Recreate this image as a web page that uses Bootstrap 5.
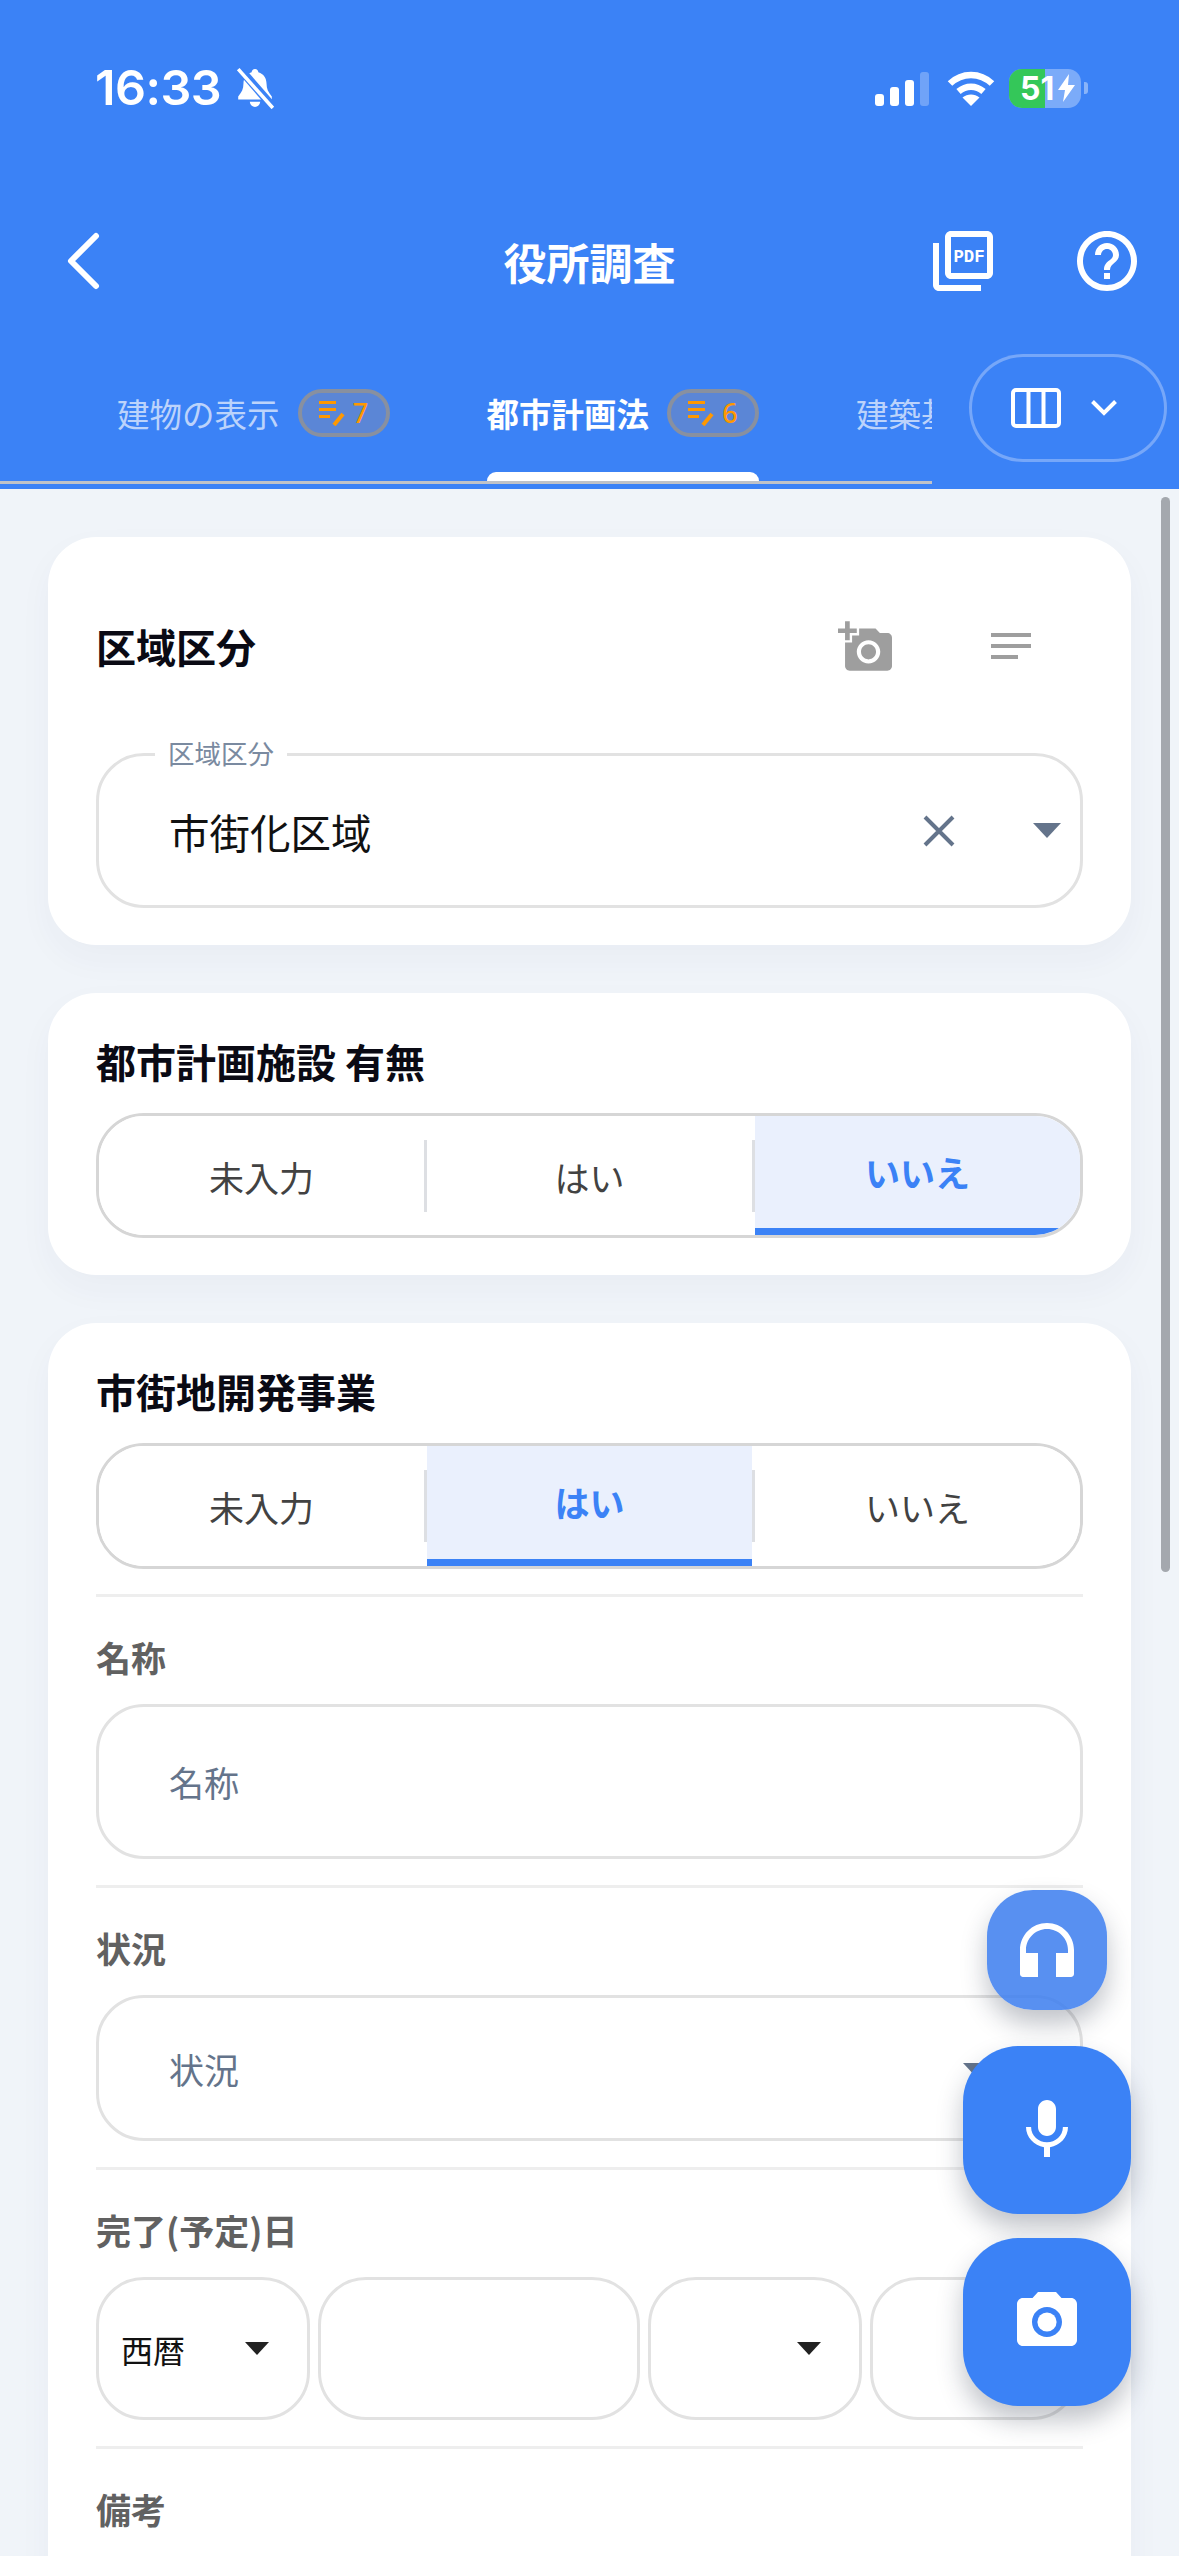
<!DOCTYPE html>
<html lang="ja">
<head>
<meta charset="utf-8">
<title>役所調査</title>
<link href="https://cdn.jsdelivr.net/npm/bootstrap@5.3.0/dist/css/bootstrap.min.css" rel="stylesheet">
<style>
html,body{margin:0;height:2556px;overflow:hidden}
body{position:relative;background:#f0f4f9;font-family:"Noto Sans CJK JP","Noto Sans",sans-serif;color:#111}
.app-head{height:489px;background:#3b82f6;color:#fff}
.stat-row{height:176px;padding:0 91px 0 95px}
.clock{font-family:Inter,"Liberation Sans",sans-serif;font-weight:600;font-size:48.5px;letter-spacing:-.5px;line-height:1}
.bell{margin-left:13px}
.cell-bars{gap:6px;height:35px;margin-right:18.5px}
.cell-bars i{display:block;width:9px;background:#fff;border-radius:3px}
.cell-bars i:nth-child(1){height:12px}
.cell-bars i:nth-child(2){height:19px}
.cell-bars i:nth-child(3){height:26px}
.cell-bars i:nth-child(4){height:34px;background:rgba(255,255,255,.27)}
.batt{width:72px;height:39px;border-radius:13px;margin-left:14px;overflow:hidden;position:relative;background:rgba(255,255,255,.33)}
.batt-fill{width:36px;background:#34c759}
.batt-txt{position:absolute;inset:0;padding-left:11px;font:700 32px/39px Inter,"Liberation Sans",sans-serif;color:#fff}
.batt-nub{width:4px;height:12px;margin-left:3px;border-radius:0 3px 3px 0;background:rgba(255,255,255,.4)}
.nav-row{height:170px;position:relative;padding:0 36px 0 64px}
.nav-title{position:absolute;left:0;right:0;text-align:center;font-weight:700;font-size:43px;line-height:60px;top:55px;margin:0}
.nav-tools{gap:72px}
.tab-zone{height:143px;position:relative}
.tab-scroll{width:932px;height:138px;border-bottom:3px solid #bfc2c8;overflow:hidden;padding:43px 0 0 117px;gap:97px;white-space:nowrap}
.tab-itm{position:relative;gap:18px;height:92px;align-items:flex-start;flex:none}
.tab-lbl{font-size:32.5px;line-height:48px;height:48px;color:#bcd3fb;font-weight:400}
.tab-itm.on .tab-lbl{color:#fff;font-weight:700}
.tab-pill{width:92px;height:48px;border:4px solid #8890a0;border-radius:24px;background:#5b86d6;color:#ff9800;font:500 27px/40px "Noto Sans",sans-serif;gap:8px}
.tab-bar{position:absolute;left:0;right:0;bottom:0;height:9px;background:#fff;border-radius:9px 9px 0 0}
.view-btn{position:absolute;left:969px;top:8px;width:198px;height:108px;border:3px solid rgba(255,255,255,.3);border-radius:54px;background:#3b82f6;gap:30px;padding-right:8px}
.page-body{padding:48px 48px 0;gap:48px}
.sheet{border:0;border-radius:48px;background:#fff;padding:0 48px;box-shadow:0 14px 34px rgba(40,60,90,.04)}
.sheet-ttl{font-size:40px;font-weight:700;line-height:48px;margin:0;color:#0a0a14;white-space:nowrap}
.head-one{padding-top:69px;height:149px;margin-bottom:67px}
.head-tools{gap:99px;padding-right:52px}
.fld{height:155px;border:3px solid #e2e2e2;border-radius:48px;background:#fff;position:relative;padding:0 70px}
.fld-val{font-size:40.5px;color:#111;margin-top:3px}
.fld-float{position:absolute;left:56px;top:-20px;padding:0 13px;background:#fff;font-size:26.5px;line-height:34px;color:#7a8aa0}
.tri{width:0;height:0;border-left:14.5px solid transparent;border-right:14.5px solid transparent;border-top:15px solid #64748b;flex:none}
.fld-clearwrap{position:absolute;right:19px;top:0;bottom:0;gap:78px}
.head-two{padding-top:44px;height:92px;margin-bottom:28px}
.seg{height:125px;border:3px solid #d6d6d6;border-radius:48px;overflow:hidden;background:#fff}
.seg-tall{height:126px}
.seg-itm{flex:1 1 0;font-size:35px;color:#424242;padding-top:3px;background:#fff}
.seg-itm.on{background:#eaf0fd;color:#3b82f6;font-weight:700;border-bottom:7px solid #3b82f6;padding-top:0}
.seg-sep{width:3px;height:72px;background:#dddfe3;flex:none}
.pad-b{padding-bottom:37px}
.sec{border-top:3px solid #eeeeee;padding:40px 0 26px}
.sec-lbl{font-size:35px;font-weight:700;line-height:40px;color:#616161;margin:0 0 27px}
.seg-wrap{padding-bottom:25px}
input.form-control.fld{padding:0 70px;font-size:35px;color:#111;box-shadow:none}
input.form-control.fld::placeholder{color:#64748b;opacity:1}
.fld-ph{font-size:35px;color:#64748b;margin-top:2px}
.sel-two{height:146px}
.sel-two .fld-caret{position:absolute;right:89px;top:65px}
.date-row{gap:8px}
.date-box{width:214px;height:143px;border:3px solid #e2e2e2;border-radius:48px;background:#fff;position:relative;flex:none;padding:0 22px;font-size:32px}
.date-box.wide{width:322px}
.date-box.tail{width:210px}
.tri-dark{border-left:12px solid transparent;border-right:12px solid transparent;border-top:13px solid #222;position:absolute;right:38px;top:62px}
.sheet-last{height:1300px}
.over-btn{position:absolute;background:#3b82f6;color:#fff;border:0;padding:0;box-shadow:0 14px 26px rgba(30,40,60,.28)}
.fab-head{left:987px;top:1890px;width:120px;height:120px;border-radius:46px;background:rgba(59,125,238,.85)}
.fab-mic{left:963px;top:2046px;width:168px;height:168px;border-radius:56px}
.fab-cam{left:963px;top:2238px;width:168px;height:168px;border-radius:56px}
.over-scroll{position:absolute;left:1161px;top:497px;width:9px;height:1075px;border-radius:5px;background:#a4a8ae}
</style>
</head>
<body>
<header class="app-head">
  <div class="stat-row d-flex align-items-center justify-content-between">
    <div class="d-flex align-items-center">
      <span class="clock">16:33</span>
      <svg class="bell" width="42" height="42" viewBox="0 0 40 40"><path fill="#fff" d="M20 2c2 0 3 1.400 3.200 3 5 1.500 7.800 5.600 7.800 11 0 5 1.600 8 5 12v3H4v-3c3.400-4 5-7 5-12 0-5.400 2.800-9.500 7.800-11C17 3.400 18 2 20 2zM15 33h10c-.4 3-2.400 5-5 5s-4.600-2-5-5z"/><path d="M5 1l32 37" stroke="#3b82f6" stroke-width="8"/><path d="M4 2l33 37" stroke="#fff" stroke-width="3.400"/></svg>
    </div>
    <div class="d-flex align-items-center">
      <div class="cell-bars d-flex align-items-end"><i></i><i></i><i></i><i></i></div>
      <svg width="48" height="36" viewBox="0 0 48 36"><path fill="none" stroke="#fff" stroke-width="6.500" d="M3 13.500C15 2 33 2 45 13.500M11.500 21.500c7.500-6.500 17.500-6.500 25 0"/><path fill="#fff" d="M24 36l-8.500-8.500c5-4 12-4 17 0z"/></svg>
      <div class="batt d-flex"><div class="batt-fill"></div><div class="batt-txt d-flex align-items-center">51<svg width="18" height="28" viewBox="0 0 18 28" class="ms-1"><path fill="#fff" d="M11 0L0 16h7l-2 12L17 11h-7z"/></svg></div></div>
      <div class="batt-nub"></div>
    </div>
  </div>
  <div class="nav-row d-flex align-items-center justify-content-between">
    <svg width="38" height="60" viewBox="0 0 38 60"><path fill="none" stroke="#fff" stroke-width="6" stroke-linecap="round" stroke-linejoin="round" d="M32 5L7 30l25 25"/></svg>
    <h1 class="nav-title">役所調査</h1>
    <div class="nav-tools d-flex align-items-center">
      <svg width="72" height="72" viewBox="0 0 24 24"><path fill="#fff" d="M20 2H8c-1.100 0-2 .9-2 2v12c0 1.100.9 2 2 2h12c1.100 0 2-.9 2-2V4c0-1.100-.9-2-2-2zm0 14H8V4h12v12zM4 6H2v14c0 1.100.9 2 2 2h14v-2H4V6z"/><text x="14" y="12.300" text-anchor="middle" fill="#fff" font-family="Liberation Mono" font-weight="700" font-size="6" textLength="10.400" lengthAdjust="spacingAndGlyphs">PDF</text></svg>
      <svg width="72" height="72" viewBox="0 0 24 24"><path fill="#fff" d="M11 18h2v-2h-2v2zm1-16C6.480 2 2 6.480 2 12s4.480 10 10 10 10-4.480 10-10S17.520 2 12 2zm0 18c-4.410 0-8-3.590-8-8s3.590-8 8-8 8 3.590 8 8-3.590 8-8 8zm0-14c-2.210 0-4 1.790-4 4h2c0-1.100.9-2 2-2s2 .9 2 2c0 2-3 1.750-3 5h2c0-2.250 3-2.500 3-5 0-2.210-1.790-4-4-4z"/></svg>
    </div>
  </div>
  <div class="tab-zone">
    <div class="tab-scroll d-flex">
      <div class="tab-itm d-flex"><span class="tab-lbl">建物の表示</span><span class="tab-pill d-flex align-items-center justify-content-center"><svg width="26" height="26" viewBox="0 0 26 26"><path fill="#ff9800" d="M0 1h17v3H0zM0 8h17v3H0zM0 15h11v3H0z"/><path stroke="#ff9800" stroke-width="4" d="M15 25l9-11"/></svg>7</span></div>
      <div class="tab-itm on d-flex"><span class="tab-lbl">都市計画法</span><span class="tab-pill d-flex align-items-center justify-content-center"><svg width="26" height="26" viewBox="0 0 26 26"><path fill="#ff9800" d="M0 1h17v3H0zM0 8h17v3H0zM0 15h11v3H0z"/><path stroke="#ff9800" stroke-width="4" d="M15 25l9-11"/></svg>6</span><span class="tab-bar"></span></div>
      <div class="tab-itm d-flex"><span class="tab-lbl">建築基準法</span></div>
    </div>
    <div class="view-btn d-flex align-items-center justify-content-center">
      <svg width="50" height="40" viewBox="0 0 50 40"><rect x="2" y="2" width="46" height="36" rx="3" fill="none" stroke="#fff" stroke-width="4"/><path stroke="#fff" stroke-width="4" d="M17.500 2v36M32.500 2v36"/></svg>
      <svg width="26" height="18" viewBox="0 0 26 18"><path fill="none" stroke="#fff" stroke-width="4" d="M1.500 2.500L13 14 24.500 2.500"/></svg>
    </div>
  </div>
</header>

<main class="page-body d-flex flex-column">
  <section class="card sheet">
    <div class="head-one d-flex align-items-center justify-content-between">
      <h2 class="sheet-ttl">区域区分</h2>
      <div class="head-tools d-flex align-items-center">
        <svg width="54" height="54" viewBox="0 0 23 23"><path fill="#9e9e9e" d="M3 4V1h2v3h3v2H5v3H3V6H0V4h3zm3 6V7h3V4h7l1.830 2H21c1.100 0 2 .9 2 2v12c0 1.100-.9 2-2 2H5c-1.100 0-2-.9-2-2V10h3zm7 9c2.760 0 5-2.240 5-5s-2.240-5-5-5-5 2.240-5 5 2.240 5 5 5zm-3.200-5c0 1.770 1.430 3.200 3.200 3.200s3.200-1.430 3.200-3.200-1.430-3.200-3.200-3.200-3.200 1.430-3.200 3.200z"/></svg>
        <svg width="40" height="26" viewBox="0 0 40 26"><path fill="#9e9e9e" d="M0 0h40v4H0zM0 11h40v4H0zM0 22h27v4H0z"/></svg>
      </div>
    </div>
    <div class="fld d-flex align-items-center">
      <span class="fld-float">区域区分</span>
      <span class="fld-val">市街化区域</span>
      <div class="fld-clearwrap d-flex align-items-center" >
        <svg width="32" height="32" viewBox="0 0 32 32"><path stroke="#64748b" stroke-width="4" d="M2 2l28 28M30 2L2 30"/></svg>
        <span class="tri"></span>
      </div>
    </div>
    <div class="pad-b"></div>
  </section>

  <section class="card sheet">
    <div class="head-two"><h2 class="sheet-ttl">都市計画施設 有無</h2></div>
    <div class="seg d-flex align-items-stretch">
      <div class="seg-itm d-flex align-items-center justify-content-center">未入力</div>
      <span class="seg-sep align-self-center"></span>
      <div class="seg-itm d-flex align-items-center justify-content-center">はい</div>
      <span class="seg-sep align-self-center"></span>
      <div class="seg-itm on d-flex align-items-center justify-content-center">いいえ</div>
    </div>
    <div class="pad-b"></div>
  </section>

  <section class="card sheet sheet-last">
    <div class="head-two"><h2 class="sheet-ttl">市街地開発事業</h2></div>
    <div class="seg-wrap">
      <div class="seg seg-tall d-flex align-items-stretch">
        <div class="seg-itm d-flex align-items-center justify-content-center">未入力</div>
        <span class="seg-sep align-self-center"></span>
        <div class="seg-itm on d-flex align-items-center justify-content-center">はい</div>
        <span class="seg-sep align-self-center"></span>
        <div class="seg-itm d-flex align-items-center justify-content-center">いいえ</div>
      </div>
    </div>
    <div class="sec">
      <p class="sec-lbl">名称</p>
      <input class="form-control fld" type="text" placeholder="名称">
    </div>
    <div class="sec">
      <p class="sec-lbl">状況</p>
      <div class="fld sel-two d-flex align-items-center"><span class="fld-ph">状況</span><span class="tri fld-caret"></span></div>
    </div>
    <div class="sec">
      <p class="sec-lbl">完了(予定)日</p>
      <div class="date-row d-flex">
        <div class="date-box d-flex align-items-center">西暦<span class="tri tri-dark"></span></div>
        <div class="date-box wide"></div>
        <div class="date-box"><span class="tri tri-dark"></span></div>
        <div class="date-box tail"></div>
      </div>
    </div>
    <div class="sec">
      <p class="sec-lbl">備考</p>
    </div>
  </section>
</main>

<div class="over-scroll"></div>
<button class="over-btn fab-head d-flex align-items-center justify-content-center" aria-label="音声"><svg width="72" height="72" viewBox="0 -.5 24 24"><path fill="#fff" d="M12 2.500c-4.970 0-9 4.030-9 9v8c0 .55.45 1 1 1h5v-8H5v-1c0-3.870 3.130-7 7-7s7 3.130 7 7v1h-4v8h5c.55 0 1-.45 1-1v-8c0-4.970-4.030-9-9-9z"/></svg></button>
<button class="over-btn fab-mic d-flex align-items-center justify-content-center" aria-label="マイク"><svg width="72" height="72" viewBox="0 0 24 24"><path fill="#fff" d="M12 14c1.660 0 2.990-1.340 2.990-3L15 5c0-1.660-1.340-3-3-3S9 3.340 9 5v6c0 1.660 1.340 3 3 3zm5.300-3c0 3-2.540 5.100-5.300 5.100S6.700 14 6.700 11H5c0 3.410 2.720 6.230 6 6.720V21h2v-3.280c3.280-.48 6-3.300 6-6.720h-1.700z"/></svg></button>
<button class="over-btn fab-cam d-flex align-items-center justify-content-center" aria-label="カメラ"><svg width="72" height="72" viewBox="0 0 24 24"><circle fill="#fff" cx="12" cy="12" r="3.200"/><path fill="#fff" d="M9 2L7.170 4H4c-1.100 0-2 .9-2 2v12c0 1.100.9 2 2 2h16c1.100 0 2-.9 2-2V6c0-1.100-.9-2-2-2h-3.170L15 2H9zm3 15c-2.760 0-5-2.240-5-5s2.240-5 5-5 5 2.240 5 5-2.240 5-5 5z"/></svg></button>
<script src="https://cdn.jsdelivr.net/npm/bootstrap@5.3.0/dist/js/bootstrap.bundle.min.js"></script>
</body>
</html>
